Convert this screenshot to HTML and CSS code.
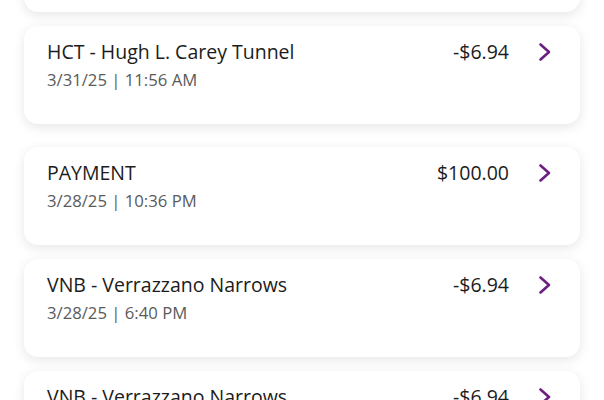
FILE: index.html
```html
<!DOCTYPE html>
<html>
<head>
<meta charset="utf-8">
<link rel="stylesheet" href="styles.css">
</head>
<body>
<div class="list">
  <div class="card"></div>
  <div class="card">
    <div class="info">
      <div class="title">HCT - Hugh L. Carey Tunnel</div>
      <div class="date">3/31/25 | 11:56 AM</div>
    </div>
    <div class="amount">-$6.94</div>
    <svg class="chev" viewBox="0 0 14 20"><path d="M2.5 2.5 L11 10 L2.5 17.5" /></svg>
  </div>
  <div class="card card-spaced">
    <div class="info">
      <div class="title">PAYMENT</div>
      <div class="date">3/28/25 | 10:36 PM</div>
    </div>
    <div class="amount">$100.00</div>
    <svg class="chev" viewBox="0 0 14 20"><path d="M2.5 2.5 L11 10 L2.5 17.5" /></svg>
  </div>
  <div class="card">
    <div class="info">
      <div class="title">VNB - Verrazzano Narrows</div>
      <div class="date">3/28/25 | 6:40 PM</div>
    </div>
    <div class="amount">-$6.94</div>
    <svg class="chev" viewBox="0 0 14 20"><path d="M2.5 2.5 L11 10 L2.5 17.5" /></svg>
  </div>
  <div class="card">
    <div class="info">
      <div class="title">VNB - Verrazzano Narrows</div>
      <div class="date">3/28/25 | 5:02 PM</div>
    </div>
    <div class="amount">-$6.94</div>
    <svg class="chev" viewBox="0 0 14 20"><path d="M2.5 2.5 L11 10 L2.5 17.5" /></svg>
  </div>
</div>
</body>
</html>
```
FILE: styles.css
```css
html, body {
  margin: 0;
  padding: 0;
  background: #ffffff;
  overflow: hidden;
  height: 400px;
}
body {
  font-family: "Open Sans", "Noto Sans", sans-serif;
  color: #1a1a1a;
}
.list {
  display: flex;
  flex-direction: column;
  gap: 14px;
  padding: 0 24px 0 24px;
  margin-top: -86px;
}
.card {
  height: 98px;
  flex-shrink: 0;
  box-sizing: border-box;
  background: #fff;
  border-radius: 14px;
  box-shadow: 0 3px 12px rgba(0, 0, 0, 0.10);
  padding: 13px 28px 0 23px;
  display: flex;
  align-items: flex-start;
}
.card-spaced {
  margin-top: 9px;
}
.info {
  flex: 1;
}
.title {
  font-size: 19.5px;
  line-height: 26px;
  color: #1c1c1c;
}
.date {
  margin-top: 4px;
  font-size: 16.7px;
  line-height: 22px;
  color: #5a5a5a;
}
.amount {
  font-size: 19.5px;
  line-height: 26px;
  color: #1c1c1c;
}
.chev {
  width: 14px;
  height: 20px;
  margin-left: 29px;
  margin-top: 3px;
  fill: none;
  stroke: #6b1f80;
  stroke-width: 2.6;
  stroke-linecap: round;
  stroke-linejoin: round;
}
```
